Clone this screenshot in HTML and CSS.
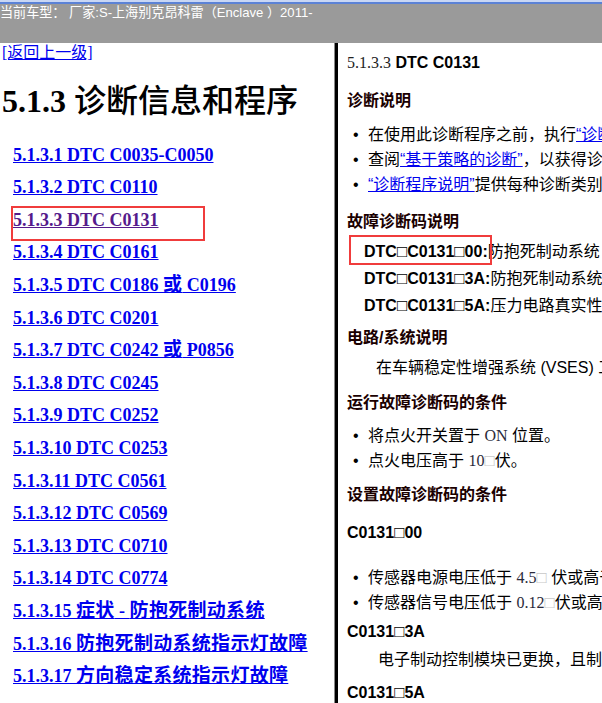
FILE: index.html
```html
<!DOCTYPE html>
<html lang="zh">
<head>
<meta charset="utf-8">
<title>5.1.3 诊断信息和程序</title>
<link rel="stylesheet" href="styles.css">
</head>
<body>
<div class="topbar">
  <div class="strip"></div>
  <div class="model">当前车型： 厂家:S-上海别克昂科雷（Enclave ）2011-</div>
</div>
<div class="main">
  <div class="left">
    <a class="back" href="#">[返回上一级]</a>
    <h1 class="page-title">5.1.3 <span class="cjk-reg">诊断信息和程序</span></h1>
    <ul class="toc">
      <li><a href="#">5.1.3.1 DTC C0035-C0050</a></li>
      <li><a href="#">5.1.3.2 DTC C0110</a></li>
      <li class="hl"><a class="visited" href="#">5.1.3.3 DTC C0131</a></li>
      <li><a href="#">5.1.3.4 DTC C0161</a></li>
      <li><a href="#">5.1.3.5 DTC C0186 <span class="zh">或</span> C0196</a></li>
      <li><a href="#">5.1.3.6 DTC C0201</a></li>
      <li><a href="#">5.1.3.7 DTC C0242 <span class="zh">或</span> P0856</a></li>
      <li><a href="#">5.1.3.8 DTC C0245</a></li>
      <li><a href="#">5.1.3.9 DTC C0252</a></li>
      <li><a href="#">5.1.3.10 DTC C0253</a></li>
      <li><a href="#">5.1.3.11 DTC C0561</a></li>
      <li><a href="#">5.1.3.12 DTC C0569</a></li>
      <li><a href="#">5.1.3.13 DTC C0710</a></li>
      <li><a href="#">5.1.3.14 DTC C0774</a></li>
      <li><a href="#">5.1.3.15 <span class="zh">症状</span> - <span class="zh">防抱死制动系统</span></a></li>
      <li><a href="#">5.1.3.16 <span class="zh">防抱死制动系统指示灯故障</span></a></li>
      <li><a href="#">5.1.3.17 <span class="zh">方向稳定系统指示灯故障</span></a></li>
    </ul>
  </div>
  <div class="divider"></div>
  <div class="right">
    <div class="doc-title"><span class="num">5.1.3.3</span> <b>DTC C0131</b></div>

    <div class="h desc-h">诊断说明</div>
    <ul class="bul desc-list">
      <li><span class="dot">•</span><span>在使用此诊断程序之前，执行<a href="#">“诊断</a></span></li>
      <li><span class="dot">•</span><span>查阅<a href="#">“基于策略的诊断”</a>，以获得诊</span></li>
      <li><span class="dot">•</span><span><a href="#">“诊断程序说明”</a>提供每种诊断类别</span></li>
    </ul>

    <div class="h dtc-h">故障诊断码说明</div>
    <div class="dtc-list">
      <div class="dtc hl2"><b>DTC<span class="tofu">□</span>C0131<span class="tofu">□</span>00:</b>防抱死制动系统</div>
      <div class="dtc"><b>DTC<span class="tofu">□</span>C0131<span class="tofu">□</span>3A:</b>防抱死制动系统</div>
      <div class="dtc"><b>DTC<span class="tofu">□</span>C0131<span class="tofu">□</span>5A:</b>压力电路真实性</div>
    </div>

    <div class="h circ-h">电路/系统说明</div>
    <div class="para circ-p">在车辆稳定性增强系统 (VSES) 工</div>

    <div class="h run-h">运行故障诊断码的条件</div>
    <ul class="bul run-list">
      <li><span class="dot">•</span><span>将点火开关置于 <span class="serif">ON</span> 位置。</span></li>
      <li><span class="dot">•</span><span>点火电压高于 <span class="serif">10</span><span class="tofu light">□</span>伏。</span></li>
    </ul>

    <div class="h set-h">设置故障诊断码的条件</div>
    <div class="code code-00">C0131<span class="tofu">□</span>00</div>
    <ul class="bul set-list">
      <li><span class="dot">•</span><span>传感器电源电压低于 <span class="serif">4.5</span><span class="tofu light">□</span> 伏或高于</span></li>
      <li><span class="dot">•</span><span>传感器信号电压低于 <span class="serif">0.12</span><span class="tofu light">□</span>伏或高于</span></li>
    </ul>
    <div class="code code-3a">C0131<span class="tofu">□</span>3A</div>
    <div class="para p-3a">电子制动控制模块已更换，且制动</div>
    <div class="code code-5a">C0131<span class="tofu">□</span>5A</div>
  </div>
</div>
</body>
</html>
```
FILE: styles.css
```css
html, body {
  margin: 0;
  padding: 0;
  background: #fff;
}
body {
  width: 602px;
  height: 703px;
  overflow: hidden;
  font-family: "Liberation Serif", "Noto Sans CJK SC", serif;
}
a { color: #0000ee; }

.topbar {
  height: 43px;
  background: #9a9a9a;
}
.strip {
  height: 2px;
  background: #c9d7f4;
  border-bottom: 2px solid #5b82d6;
}
.model {
  font-family: "Liberation Sans", "Noto Sans CJK SC", sans-serif;
  font-size: 13.1px;
  line-height: 18px;
  height: 18px;
  color: #fff;
  white-space: nowrap;
}

.main {
  display: flex;
  height: 660px;
  overflow: hidden;
}
.left {
  width: 334px;
  flex: none;
  display: flex;
  flex-direction: column;
  align-items: flex-start;
}
.back {
  margin-left: 2px;
  font-size: 16px;
  line-height: 20px;
  height: 20px;
  font-family: "Liberation Serif", "Noto Sans CJK SC", serif;
}
.page-title {
  margin: 18px 0 0 2px;
  font-size: 32px;
  line-height: 40px;
  height: 40px;
  font-weight: bold;
  color: #000;
  white-space: nowrap;
}
.cjk-reg { font-weight: 500; }
.toc {
  list-style: none;
  margin: 17.7px 0 0 0;
  padding: 0 0 0 13px;
}
.toc li {
  position: relative;
  font-size: 18px;
  line-height: 32.6px;
  height: 32.6px;
  font-weight: bold;
  white-space: nowrap;
}
.toc .zh {
  font-size: 19px;
  letter-spacing: 0.3px;
}
.toc a { color: #0000ee; }
.toc a.visited { color: #551a8b; }
.hl::after {
  content: "";
  position: absolute;
  left: -2px;
  top: 2px;
  width: 190px;
  height: 31px;
  border: 2px solid #f03c3c;
}

.divider {
  width: 3px;
  flex: none;
  background: #000;
  border-left: 1px solid #8a8a8a;
}
.right {
  flex: 1;
  min-width: 0;
  overflow: hidden;
  display: flex;
  flex-direction: column;
  padding: 8px 0 0 9px;
  font-family: "Liberation Sans", "Noto Sans CJK SC", sans-serif;
  font-size: 16px;
  color: #000;
  white-space: nowrap;
}
.doc-title { line-height: 24px; height: 24px; }
.num { font-family: "Liberation Serif", serif; color: #222; }
.h {
  font-weight: bold;
  line-height: 24px;
  height: 24px;
  color: #1a0000;
}
.bul {
  list-style: none;
  margin: 0;
  padding: 0;
}
.bul li {
  display: flex;
  line-height: 25px;
  height: 25px;
  padding-left: 6px;
}
.dot { width: 15px; flex: none; }
.serif { font-family: "Liberation Serif", serif; color: #2a2a3a; }
.tofu {
  font-family: "Liberation Sans", sans-serif;
  font-weight: normal;
  font-size: 17px;
  color: #000;
}
.tofu.light { color: #c8c8c8; }
.dtc {
  position: relative;
  line-height: 27px;
  height: 27px;
  padding-left: 17px;
}
.hl2::after {
  content: "";
  position: absolute;
  left: 2px;
  top: -2.5px;
  width: 139px;
  height: 26px;
  border: 2px solid #f03c3c;
}
.para { line-height: 25px; height: 25px; }
.circ-p { padding-left: 29px; }
.p-3a { padding-left: 31px; }
.code { font-weight: bold; line-height: 24px; height: 24px; }

.desc-h { margin-top: 14px; }
.desc-list { margin-top: 8.5px; }
.dtc-h { margin-top: 13.5px; }
.dtc-list { margin-top: 3.5px; }
.circ-h { margin-top: 7.5px; }
.circ-p { margin-top: 4.5px; }
.run-h { margin-top: 11.5px; }
.run-list { margin-top: 7.5px; }
.set-h { margin-top: 10.5px; }
.code-00 { margin-top: 14px; }
.set-list { margin-top: 19.5px; }
.code-3a { margin-top: 5.5px; }
.p-3a { margin-top: 2.5px; }
.code-5a { margin-top: 9.5px; }
```
